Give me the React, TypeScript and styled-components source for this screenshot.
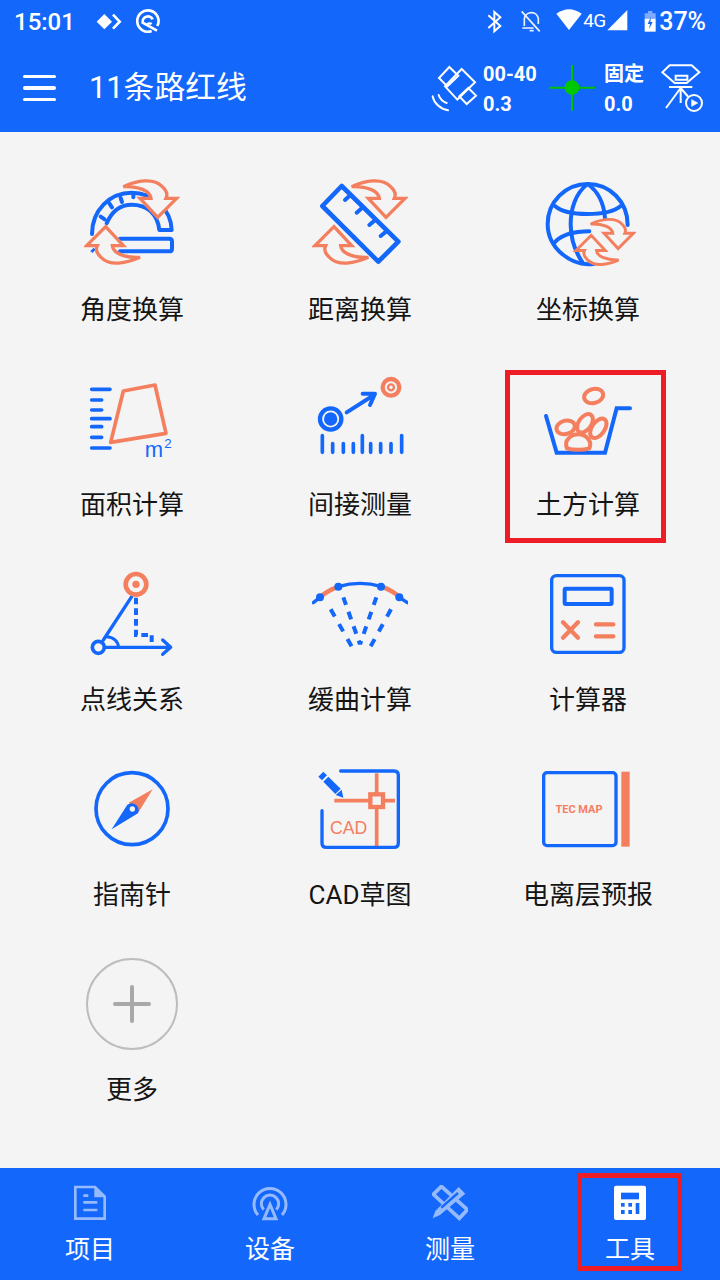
import React from 'react';
import styled, { createGlobalStyle } from 'styled-components';

const BLUE = '#1467fb';
const CORAL = '#f47f5f';
const PAGE = '#f4f4f4';
const RED = '#ee1c25';
const GREEN = '#00c000';
const FONT = 'Roboto, "Noto Sans CJK SC", sans-serif';

const GlobalStyle = createGlobalStyle`
  html, body {
    margin: 0;
    padding: 0;
    background: ${PAGE};
    font-family: ${FONT};
  }
`;

const Screen = styled.div`
  width: 720px;
  height: 1280px;
  display: flex;
  flex-direction: column;
  overflow: hidden;
`;

const TopBar = styled.header`
  background: ${BLUE};
  color: #fff;
  flex-shrink: 0;
`;

const StatusBar = styled.div`
  height: 44px;
  display: flex;
  align-items: center;
  justify-content: space-between;
  padding: 0 14px 0 14px;
`;

const StatusGroup = styled.div`
  display: flex;
  align-items: center;
`;

const Clock = styled.span`
  font-size: 24px;
  font-weight: 500;
  line-height: 44px;
`;

const NetworkType = styled.span`
  font-size: 19px;
  letter-spacing: -0.6px;
  width: 23px;
  line-height: 30px;
  margin-bottom: 2px;
`;

const Percent = styled.span`
  font-size: 25px;
  font-weight: 500;
  line-height: 44px;
  margin-left: 2px;
`;

const Glyph = styled.svg<{ $ml?: number }>`
  display: block;
  flex-shrink: 0;
  margin-left: ${(p) => p.$ml ?? 0}px;
`;

const ActionBar = styled.div`
  height: 88px;
  display: flex;
  align-items: center;
  padding: 0 15px 0 23px;
`;

const MenuButton = styled.div`
  width: 33px;
  display: flex;
  flex-direction: column;
  gap: 8px;
  margin-right: 33px;
  span {
    display: block;
    height: 3.5px;
    border-radius: 2px;
    background: #fff;
  }
`;

const Title = styled.div`
  flex: 1;
  font-size: 30.8px;
  line-height: 44px;
`;

const Stat = styled.div<{ $w: number; $ml: number }>`
  width: ${(p) => p.$w}px;
  margin-left: ${(p) => p.$ml}px;
  display: flex;
  flex-direction: column;
  font-size: 20px;
  font-weight: 700;
  line-height: 26px;
  gap: 4px;
  padding-top: 1px;
`;

const ToolGrid = styled.main`
  flex: 1;
  display: grid;
  grid-template-columns: repeat(3, 228px);
  grid-auto-rows: 195px;
  padding: 42px 18px 0;
`;

const ToolCell = styled.div`
  position: relative;
  display: flex;
  flex-direction: column;
  align-items: center;
`;

const ToolLabel = styled.div`
  margin-top: 22px;
  font-size: 26px;
  line-height: 36px;
  color: #151515;
`;

const Highlight = styled.div<{ $top: number; $left: number; $w: number; $h: number }>`
  position: absolute;
  top: ${(p) => p.$top}px;
  left: ${(p) => p.$left}px;
  width: ${(p) => p.$w}px;
  height: ${(p) => p.$h}px;
  box-sizing: border-box;
  border: 5px solid ${RED};
  pointer-events: none;
`;

const TabBar = styled.nav`
  height: 112px;
  flex-shrink: 0;
  display: flex;
  background: ${BLUE};
`;

const Tab = styled.div`
  position: relative;
  flex: 1;
  display: flex;
  flex-direction: column;
  align-items: center;
  padding-top: 17px;
`;

const TabLabel = styled.div`
  margin-top: 12px;
  font-size: 25px;
  line-height: 34px;
  color: #fff;
`;

const SvgText = styled.text<{ $size: number; $weight?: number }>`
  font-family: ${(p) => (p.$weight ? 'Roboto' : '"Liberation Sans"')}, sans-serif;
  font-size: ${(p) => p.$size}px;
  font-weight: ${(p) => p.$weight ?? 400};
`;

const arrowPath =
  'M845 50C885 32 935 22 962 50C975 62 978 75 973 85L1005 85L948 142L895 85L928 85C925 62 890 48 845 50Z';

const Arrow = ({ transform, width = 10 }: { transform?: string; width?: number }) => (
  <path d={arrowPath} transform={transform} fill={PAGE} stroke={CORAL} strokeWidth={width} strokeLinejoin="miter" />
);

const ToolIcon = ({ box, children }: { box: string; children: React.ReactNode }) => (
  <Glyph width={96} height={96} viewBox={box} fill="none" strokeLinecap="round" strokeLinejoin="round">
    {children}
  </Glyph>
);

const Protractor = () => (
  <ToolIcon box="42 12 288 288">
    <g stroke={BLUE} strokeWidth={12}>
      <path d="M66 192C66 120 120 68 185 68C250 68 304 120 305 180L268 180C262 130 230 104 185 104C150 104 125 125 110 160" />
      <path d="M150 206L298 206Q306 206 306 214L306 236Q306 244 298 244L150 244" />
      <path d="M66 238L72 244" strokeLinecap="butt" strokeWidth={14} />
      <path d="M92 140L104 148M118 100L126 112M152 84L156 96M190 70L190 82" />
    </g>
    <g transform="translate(-685 0)">
      <Arrow />
      <Arrow transform="rotate(180 870 156)" />
    </g>
  </ToolIcon>
);

const RulerIcon = () => (
  <ToolIcon box="726 12 288 288">
    <path d="M815 48L985 215L925 275L757 108Z" stroke={BLUE} strokeWidth={14} />
    <path d="M825 90L838 78M860 128L875 115M898 165L913 152M932 198L948 185" stroke={BLUE} strokeWidth={12} />
    <Arrow />
    <Arrow transform="rotate(180 870 156)" />
  </ToolIcon>
);

const GlobeIcon = () => (
  <ToolIcon box="120 12 288 288">
    <g stroke={BLUE} strokeWidth={12}>
      <path d="M283 281C215 292 143 235 143 162C143 95 197 42 263 42C330 42 383 95 383 165" />
      <path d="M263 42C225 70 212 120 212 162C212 200 222 240 248 278" />
      <path d="M263 42C295 65 312 100 315 145" />
      <path d="M165 108C200 140 325 140 362 108" />
      <path d="M165 216C190 190 225 184 268 184" />
    </g>
    <Arrow transform="translate(-404 122) scale(0.8)" width={11} />
    <Arrow transform="translate(-360 60) scale(0.8) rotate(180 870 156)" width={11} />
  </ToolIcon>
);

const AreaIcon = () => (
  <ToolIcon box="42 12 288 288">
    <path d="M65 73L120 73M65 105L95 105M65 135L95 135M65 161L120 161M65 185L95 185M65 217L95 217M65 249L120 249" stroke={BLUE} strokeWidth={11} />
    <path d="M160 78L255 60L288 205L122 232Z" stroke={CORAL} strokeWidth={11} />
    <SvgText x={224} y={275} $size={66} fill={BLUE}>m</SvgText>
    <SvgText x={283} y={250} $size={40} fill={BLUE}>2</SvgText>
  </ToolIcon>
);

const IndirectIcon = () => (
  <ToolIcon box="726 12 288 288">
    <circle cx={782} cy={162} r={32} stroke={BLUE} strokeWidth={13} />
    <circle cx={782} cy={162} r={20} fill={BLUE} />
    <path d="M830 142L912 90M878 86L915 86L900 120" stroke={BLUE} strokeWidth={12} />
    <circle cx={963} cy={67} r={25} stroke={CORAL} strokeWidth={13} />
    <circle cx={963} cy={67} r={9} stroke={CORAL} strokeWidth={7} />
    <path d="M757 212L757 262M788 236L788 262M820 236L820 262M850 236L850 262M877 212L877 262M902 236L902 262M932 236L932 262M963 236L963 262M995 212L995 262" stroke={BLUE} strokeWidth={11} />
  </ToolIcon>
);

const BasketIcon = () => (
  <ToolIcon box="120 12 288 288">
    <path d="M138 153L170 263L315 263L350 130L390 130" stroke={BLUE} strokeWidth={12} strokeLinejoin="miter" />
    <g stroke={CORAL} strokeWidth={12}>
      <ellipse cx={281} cy={93} rx={29} ry={21} transform="rotate(-15 281 93)" />
      <ellipse cx={197} cy={187} rx={28} ry={20} transform="rotate(-15 197 187)" />
      <ellipse cx={255} cy={175} rx={19} ry={31} transform="rotate(35 255 175)" />
      <ellipse cx={295} cy={190} rx={19} ry={33} transform="rotate(35 295 190)" />
      <path d="M201 250C190 225 215 208 235 208C258 208 278 228 268 250C250 256 220 256 201 250Z" />
    </g>
  </ToolIcon>
);

const PointLineIcon = () => (
  <ToolIcon box="42 -3 288 288">
    <path d="M185 95L100 225" stroke={BLUE} strokeWidth={10} />
    <path d="M198 98L198 210L245 210L245 240" stroke={BLUE} strokeWidth={12} strokeDasharray="20 12" strokeLinecap="butt" strokeLinejoin="miter" />
    <path d="M110 215C130 215 145 230 145 245" stroke={BLUE} strokeWidth={9} />
    <path d="M105 247L300 247M278 225L302 247L278 268" stroke={BLUE} strokeWidth={10} />
    <circle cx={85} cy={247} r={18} stroke={BLUE} strokeWidth={11} />
    <circle cx={198} cy={58} r={31} stroke={CORAL} strokeWidth={14} />
    <circle cx={198} cy={58} r={11} fill={CORAL} />
  </ToolIcon>
);

const CurveIcon = () => (
  <ToolIcon box="726 -3 288 288">
    <path d="M750 97C766 82 786 72 805 65M935 65C955 72 973 82 990 97" stroke={CORAL} strokeWidth={14} strokeLinecap="butt" />
    <path d="M805 65C848 52 892 52 935 65" stroke={BLUE} strokeWidth={10} />
    <path d="M730 113L750 97M1012 113L988 97" stroke={BLUE} strokeWidth={10} />
    <g fill={BLUE}>
      <circle cx={805} cy={65} r={12} />
      <circle cx={933} cy={65} r={12} />
      <circle cx={750} cy={97} r={12} />
      <circle cx={988} cy={97} r={12} />
    </g>
    <g stroke={BLUE} strokeWidth={12} strokeLinecap="butt">
      <path d="M820 97L870 238" strokeDasharray="24 22" />
      <path d="M919 97L870 238" strokeDasharray="24 22" />
      <path d="M782 133L845 244" strokeDasharray="25 26" />
      <path d="M963 133L902 244" strokeDasharray="25 26" />
    </g>
  </ToolIcon>
);

const CalculatorIcon = () => (
  <ToolIcon box="30 -3 288 288">
    <rect x={65} y={32} width={217} height={230} rx={14} stroke={BLUE} strokeWidth={10} />
    <rect x={104} y={71} width={141} height={46} rx={3} stroke={BLUE} strokeWidth={12} />
    <path d="M99 172L144 218M144 172L99 218M198 178L250 178M198 214L250 214" stroke={CORAL} strokeWidth={13} />
  </ToolIcon>
);

const CompassIcon = () => (
  <ToolIcon box="42 -3 288 288">
    <circle cx={186} cy={146} r={108} stroke={BLUE} strokeWidth={11} />
    <path d="M248 88L176 128L206 156Z" fill={CORAL} />
    <path d="M125 208L172 134Q186 124 200 136Q210 148 204 160Z" fill={BLUE} />
    <circle cx={187} cy={147} r={8} fill={PAGE} />
  </ToolIcon>
);

const CadIcon = () => (
  <ToolIcon box="726 -3 288 288">
    <path d="M920 40L920 262M793 122L975 122" stroke={CORAL} strokeWidth={11} strokeLinecap="butt" />
    <rect x={901} y={103} width={38} height={38} fill={PAGE} stroke={CORAL} strokeWidth={13} strokeLinejoin="miter" />
    <path d="M812 33L972 33Q985 33 985 46L985 249Q985 262 972 262L769 262Q756 262 756 249L756 152" stroke={BLUE} strokeWidth={10} />
    <path d="M745 50L760 35L771 46L756 61Z" fill={BLUE} />
    <path d="M760 65L775 50L812 86L796 102Z" fill={BLUE} />
    <path d="M797 105L815 89L820 113Z" fill={BLUE} />
    <SvgText x={780} y={222} $size={53} fill={CORAL}>CAD</SvgText>
  </ToolIcon>
);

const TecMapIcon = () => (
  <ToolIcon box="30 582 288 288">
    <rect x={41} y={623} width={217} height={219} rx={10} stroke={BLUE} strokeWidth={10} />
    <rect x={274} y={620} width={25} height={225} fill={CORAL} />
    <SvgText x={147} y={744} $size={33} $weight={700} textAnchor="middle" fill={CORAL}>TEC MAP</SvgText>
  </ToolIcon>
);

const MoreIcon = () => (
  <Glyph width={96} height={96} viewBox="0 0 96 96" fill="none">
    <circle cx={48} cy={50} r={45} stroke="#bdbdbd" strokeWidth={2} />
    <path d="M31 50L65 50M48 33L48 67" stroke="#a8a8a8" strokeWidth={4} strokeLinecap="round" />
  </Glyph>
);

const tools = [
  { name: '角度换算', icon: <Protractor /> },
  { name: '距离换算', icon: <RulerIcon /> },
  { name: '坐标换算', icon: <GlobeIcon /> },
  { name: '面积计算', icon: <AreaIcon /> },
  { name: '间接测量', icon: <IndirectIcon /> },
  { name: '土方计算', icon: <BasketIcon />, marked: true },
  { name: '点线关系', icon: <PointLineIcon /> },
  { name: '缓曲计算', icon: <CurveIcon /> },
  { name: '计算器', icon: <CalculatorIcon /> },
  { name: '指南针', icon: <CompassIcon /> },
  { name: 'CAD草图', icon: <CadIcon /> },
  { name: '电离层预报', icon: <TecMapIcon /> },
  { name: '更多', icon: <MoreIcon /> },
];

const TabIcon = ({ box, dim, children }: { box: string; dim?: boolean; children: React.ReactNode }) => (
  <Glyph width={36} height={36} viewBox={box} fill="none" opacity={dim ? 0.55 : 1}>
    {children}
  </Glyph>
);

const tabs = [
  {
    name: '项目',
    icon: (
      <TabIcon box="216 60 108 108" dim>
        <path d="M226 66L285 66L314 95L314 161L226 161Z" stroke="#fff" strokeWidth={8} />
        <path d="M283 62L318 97L283 97Z" fill="#fff" />
        <path d="M250 92L265 92M250 112L292 112M250 135L292 135" stroke="#fff" strokeWidth={8} />
      </TabIcon>
    ),
  },
  {
    name: '设备',
    icon: (
      <TabIcon box="756 60 108 108" dim>
        <path d="M774 150A48 48 0 1 1 846 150" stroke="#fff" strokeWidth={9} />
        <path d="M791 134A26 26 0 1 1 829 134" stroke="#fff" strokeWidth={9} />
        <path d="M810 118L828 161L792 161Z" stroke="#fff" strokeWidth={9} />
      </TabIcon>
    ),
  },
  {
    name: '测量',
    icon: (
      <TabIcon box="216 60 108 108" dim>
        <path d="M244 64L322 134L298 160L220 88Z" stroke="#fff" strokeWidth={11} />
        <path d="M296 66L316 86L240 150L218 160L226 138Z" fill="#fff" />
        <path d="M244 128L294 84" stroke={BLUE} strokeWidth={7} />
      </TabIcon>
    ),
  },
  {
    name: '工具',
    marked: true,
    icon: (
      <TabIcon box="756 60 108 108">
        <rect x={762} y={62} width={96} height={103} rx={6} fill="#fff" />
        <g fill={BLUE}>
          <rect x={783} y={83} width={54} height={20} />
          <rect x={783} y={114} width={11} height={11} />
          <rect x={805} y={114} width={11} height={11} />
          <rect x={827} y={114} width={11} height={33} />
          <rect x={783} y={135} width={11} height={12} />
          <rect x={805} y={135} width={11} height={12} />
        </g>
      </TabIcon>
    ),
  },
];

export default function App() {
  return (
    <Screen>
      <GlobalStyle />
      <TopBar>
        <StatusBar>
          <StatusGroup>
            <Clock>15:01</Clock>
            <Glyph $ml={18} width={32} height={30} viewBox="276 21 96 90" fill="none">
              <path d="M287 65L310 42L333 65L310 88Z" fill="#fff" />
              <path d="M336 44L356 65L336 86" stroke="#fff" strokeWidth={8} />
            </Glyph>
            <Glyph $ml={9} width={29} height={30} viewBox="399 21 87 90" fill="none">
              <path d="M452 93A32 32 0 1 1 469 78" stroke="#fff" strokeWidth={8} />
              <path d="M468 92L425 68A16 16 0 0 1 455 58" stroke="#fff" strokeWidth={8} />
              <path d="M438 74A10 10 0 0 1 452 72" stroke="#fff" strokeWidth={7} />
            </Glyph>
          </StatusGroup>
          <StatusGroup>
            <Glyph width={20} height={30} viewBox="192 21 60 90" fill="none">
              <path d="M208 46L244 78L226 94L226 36L244 52L208 84" stroke="#fff" strokeWidth={6} />
            </Glyph>
            <Glyph $ml={16} width={24} height={30} viewBox="300 21 72 90" fill="none" opacity={0.92}>
              <path d="M316 78L316 56C318 44 328 38 338 38C348 38 356 46 358 56L358 72" stroke="#fff" strokeWidth={5} />
              <path d="M308 34L362 94M310 84L344 84M332 92L344 92" stroke="#fff" strokeWidth={5} />
            </Glyph>
            <Glyph $ml={12} width={28} height={30} viewBox="408 21 84 90">
              <path d="M412 41Q450 14 488 41L450 90Z" fill="#fff" />
            </Glyph>
            <NetworkType>4G</NetworkType>
            <Glyph width={24} height={30} viewBox="561 21 72 90">
              <path d="M565 91L625 30L625 91Z" fill="#fff" />
            </Glyph>
            <Glyph $ml={13} width={14} height={30} viewBox="672 21 42 90">
              <path d="M677 40L687 40L687 33L700 33L700 40L710 40L710 56L677 56Z" fill="#fff" opacity={0.45} />
              <path d="M677 56L710 56L710 95L677 95Z" fill="#fff" />
              <path d="M696 50L686 72L693 72L690 88L701 66L694 66Z" fill={BLUE} />
            </Glyph>
            <Percent>37%</Percent>
          </StatusGroup>
        </StatusBar>
        <ActionBar>
          <MenuButton>
            <span />
            <span />
            <span />
          </MenuButton>
          <Title>11条路红线</Title>
          <Glyph width={48} height={54} viewBox="30 174 144 162" fill="none" stroke="#fff" strokeWidth={6}>
            <path d="M88 192L57 225L82 250L115 218Z" />
            <path d="M125 198L165 238L112 290L75 250Z" />
            <path d="M145 255L168 278L140 303L118 280Z" />
            <path d="M38 280C42 300 60 318 84 322M56 276C60 288 68 296 80 300" strokeLinecap="round" />
          </Glyph>
          <Stat $w={66} $ml={5}>
            <span>00-40</span>
            <span>0.3</span>
          </Stat>
          <Glyph width={46} height={46} viewBox="388 190 138 138">
            <path d="M388 258L526 258M457 190L457 327" stroke={GREEN} strokeWidth={6} />
            <circle cx={457} cy={258} r={22} fill="#00c800" />
          </Glyph>
          <Stat $w={54} $ml={9}>
            <span>固定</span>
            <span>0.0</span>
          </Stat>
          <Glyph $ml={3} width={44} height={50} viewBox="726 190 132 150" fill="none" stroke="#fff" strokeWidth={6}>
            <path d="M752 197L818 197L841 218L803 250L767 250L730 218Z" />
            <path d="M770 228L805 228L805 240L770 240Z" />
            <path d="M750 262L820 262M785 265L741 325M785 265L785 310M785 265L808 292" />
            <circle cx={825} cy={310} r={24} />
            <path d="M818 300L836 310L818 320Z" fill="#fff" strokeWidth={2} />
          </Glyph>
        </ActionBar>
      </TopBar>

      <ToolGrid>
        {tools.map((tool) => (
          <ToolCell key={tool.name}>
            {tool.icon}
            <ToolLabel>{tool.name}</ToolLabel>
            {tool.marked && <Highlight $top={1} $left={31} $w={161} $h={173} />}
          </ToolCell>
        ))}
      </ToolGrid>

      <TabBar>
        {tabs.map((tab) => (
          <Tab key={tab.name}>
            {tab.icon}
            <TabLabel>{tab.name}</TabLabel>
            {tab.marked && <Highlight $top={5} $left={37} $w={105} $h={98} />}
          </Tab>
        ))}
      </TabBar>
    </Screen>
  );
}
